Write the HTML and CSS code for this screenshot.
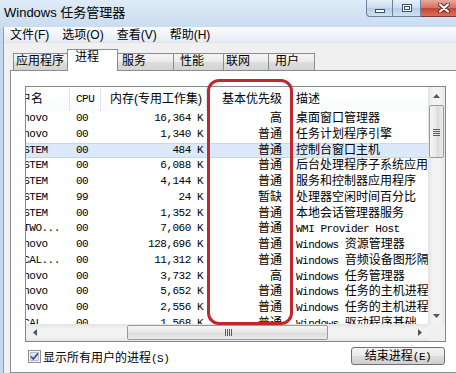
FILE: index.html
```html
<!DOCTYPE html>
<html lang="zh-CN">
<head>
    <meta charset="UTF-8">
    <meta name="viewport" content="width=device-width, initial-scale=1.0">
    <title>Windows 任务管理器</title>
    <link rel="stylesheet" href="styles.css">
</head>
<body>
    <div class="window">
        <div class="titlebar">
            <span class="title">Windows 任务管理器</span>
            <div class="controls">
                <span class="ctl ctl-min"><i></i></span>
                <span class="ctl ctl-max"><i></i></span>
                <span class="ctl ctl-close">
                    <svg width="12" height="10" viewBox="0 0 12 10">
                        <path d="M2 1.5 L10 8.5 M10 1.5 L2 8.5" stroke="#5a2420" stroke-width="4" stroke-linecap="round"/>
                        <path d="M2 1.5 L10 8.5 M10 1.5 L2 8.5" stroke="#ffffff" stroke-width="2.2" stroke-linecap="round"/>
                    </svg>
                </span>
            </div>
        </div>

        <div class="frame">
            <div class="client">
                <div class="menubar">
                    <span>文件(F)</span>
                    <span>选项(O)</span>
                    <span>查看(V)</span>
                    <span>帮助(H)</span>
                </div>

                <div class="tabs">
                    <span class="tab">应用程序</span>
                    <span class="tab active">进程</span>
                    <span class="tab">服务</span>
                    <span class="tab">性能</span>
                    <span class="tab">联网</span>
                    <span class="tab">用户</span>
                </div>

                <div class="page">
                    <div class="list">
                        <div class="list-body">
                            <div class="rows">
                                <div class="row head">
                                    <span class="c1">用户名</span>
                                    <span class="c2">CPU</span>
                                    <span class="c3">内存(专用工作集)</span>
                                    <span class="c4">基本优先级</span>
                                    <span class="c5">描述</span>
                                </div>
                                <div class="row">
                                    <span class="c1">Lenovo</span><span class="c2">00</span><span class="c3">16,364 K</span>
                                    <span class="c4">高</span><span class="c5">桌面窗口管理器</span>
                                </div>
                                <div class="row">
                                    <span class="c1">Lenovo</span><span class="c2">00</span><span class="c3">1,340 K</span>
                                    <span class="c4">普通</span><span class="c5">任务计划程序引擎</span>
                                </div>
                                <div class="row selected">
                                    <span class="c1">SYSTEM</span><span class="c2">00</span><span class="c3">484 K</span>
                                    <span class="c4">普通</span><span class="c5">控制台窗口主机</span>
                                </div>
                                <div class="row">
                                    <span class="c1">SYSTEM</span><span class="c2">00</span><span class="c3">6,088 K</span>
                                    <span class="c4">普通</span><span class="c5">后台处理程序子系统应用程序</span>
                                </div>
                                <div class="row">
                                    <span class="c1">SYSTEM</span><span class="c2">00</span><span class="c3">4,144 K</span>
                                    <span class="c4">普通</span><span class="c5">服务和控制器应用程序</span>
                                </div>
                                <div class="row">
                                    <span class="c1">SYSTEM</span><span class="c2">99</span><span class="c3">24 K</span>
                                    <span class="c4">暂缺</span><span class="c5">处理器空闲时间百分比</span>
                                </div>
                                <div class="row">
                                    <span class="c1">SYSTEM</span><span class="c2">00</span><span class="c3">1,352 K</span>
                                    <span class="c4">普通</span><span class="c5">本地会话管理器服务</span>
                                </div>
                                <div class="row">
                                    <span class="c1">NETWO...</span><span class="c2">00</span><span class="c3">7,060 K</span>
                                    <span class="c4">普通</span><span class="c5"><span class="en">WMI Provider Host</span></span>
                                </div>
                                <div class="row">
                                    <span class="c1">Lenovo</span><span class="c2">00</span><span class="c3">128,696 K</span>
                                    <span class="c4">普通</span><span class="c5"><span class="en">Windows </span>资源管理器</span>
                                </div>
                                <div class="row">
                                    <span class="c1">LOCAL...</span><span class="c2">00</span><span class="c3">11,312 K</span>
                                    <span class="c4">普通</span><span class="c5"><span class="en">Windows </span>音频设备图形隔离</span>
                                </div>
                                <div class="row">
                                    <span class="c1">Lenovo</span><span class="c2">00</span><span class="c3">3,732 K</span>
                                    <span class="c4">高</span><span class="c5"><span class="en">Windows </span>任务管理器</span>
                                </div>
                                <div class="row">
                                    <span class="c1">Lenovo</span><span class="c2">00</span><span class="c3">5,652 K</span>
                                    <span class="c4">普通</span><span class="c5"><span class="en">Windows </span>任务的主机进程</span>
                                </div>
                                <div class="row">
                                    <span class="c1">Lenovo</span><span class="c2">00</span><span class="c3">2,556 K</span>
                                    <span class="c4">普通</span><span class="c5"><span class="en">Windows </span>任务的主机进程</span>
                                </div>
                                <div class="row">
                                    <span class="c1">LOCAL...</span><span class="c2">00</span><span class="c3">1,568 K</span>
                                    <span class="c4">普通</span><span class="c5"><span class="en">Windows </span>驱动程序基础</span>
                                </div>
                            </div>

                            <div class="vscroll">
                                <span class="sb-btn">
                                    <svg width="7" height="4" viewBox="0 0 7 4"><path d="M0 4 L3.5 0 L7 4 Z" fill="#4d5563"/></svg>
                                </span>
                                <span class="vthumb">
                                    <svg width="7" height="8" viewBox="0 0 7 8"><path d="M0 1.5 H7 M0 3.5 H7 M0 5.5 H7 M0 7.5 H7" stroke="#5c5c5c" stroke-width="1"/></svg>
                                </span>
                                <span class="sb-fill"></span>
                                <span class="sb-btn">
                                    <svg width="7" height="4" viewBox="0 0 7 4"><path d="M0 0 L3.5 4 L7 0 Z" fill="#4d5563"/></svg>
                                </span>
                            </div>
                        </div>

                        <div class="hbar">
                            <div class="hscroll">
                                <span class="sb-btn">
                                    <svg width="4" height="7" viewBox="0 0 4 7"><path d="M4 0 L0 3.5 L4 7 Z" fill="#4d5563"/></svg>
                                </span>
                                <span class="hthumb">
                                    <svg width="8" height="7" viewBox="0 0 8 7"><path d="M1.5 0 V7 M3.5 0 V7 M5.5 0 V7 M7.5 0 V7" stroke="#5c5c5c" stroke-width="1"/></svg>
                                </span>
                                <span class="sb-fill"></span>
                                <span class="sb-btn">
                                    <svg width="4" height="7" viewBox="0 0 4 7"><path d="M0 0 L4 3.5 L0 7 Z" fill="#4d5563"/></svg>
                                </span>
                            </div>
                            <div class="corner"></div>
                        </div>
                    </div>

                    <div class="footer">
                        <label class="check">
                            <svg width="13" height="13" viewBox="0 0 13 13">
                                <rect x="0.5" y="0.5" width="12" height="12" fill="#f4f6f9" stroke="#8e8f8f"/>
                                <rect x="2.5" y="2.5" width="8" height="8" fill="#dfe6ef" stroke="#b4bdc9"/>
                                <path d="M3 6.5 L5.3 9 L10 3.5" fill="none" stroke="#30549a" stroke-width="1.8"/>
                            </svg>
                            <span>显示所有用户的进程<span class="key">(S)</span></span>
                        </label>
                        <button class="end-btn">结束进程<span class="key">(E)</span></button>
                    </div>
                </div>
            </div>
        </div>

        <!-- red annotation around the priority column -->
        <div class="mark"></div>
    </div>
</body>
</html>
```

FILE: styles.css
```css
/* General */
* {
  box-sizing: border-box;
  margin: 0;
  padding: 0;
}

body {
  width: 456px;
  height: 373px;
  overflow: hidden;
  font-family: "Liberation Sans", "Noto Sans CJK SC", sans-serif;
  font-size: 12px;
  color: #000000;
  background: #c4d9ef;
}

.window {
  position: relative;
  width: 456px;
  height: 373px;
  display: flex;
  flex-direction: column;
}

/* Title bar */
.titlebar {
  flex: none;
  height: 27px;
  display: flex;
  justify-content: space-between;
  background: linear-gradient(#dfebf7, #cadcf0);
}

.title {
  padding: 5px 0 0 4px;
  font-size: 13px;
  line-height: 15px;
}

.controls {
  display: flex;
  align-items: flex-start;
  margin-right: -12px;
}

.ctl {
  height: 17px;
  display: flex;
  align-items: center;
  justify-content: center;
  border: 1px solid #6a819f;
  border-top: none;
}

.ctl-min,
.ctl-max {
  background: linear-gradient(#e8f0f9, #cbdcee 50%, #b7cde6 51%, #cfe0f2);
}

.ctl-min {
  width: 27px;
  border-radius: 0 0 0 4px;
}

.ctl-max {
  width: 28px;
  border-left: none;
}

.ctl-close {
  width: 47px;
  border-left: none;
  border-color: #7d3a34;
  border-radius: 0 0 4px 0;
  background: linear-gradient(#e8a999, #d4705f 50%, #c3432f 51%, #d8705a);
}

.ctl-min i {
  width: 10px;
  height: 4px;
  margin-top: 6px;
  border: 1px solid #3b4f6a;
  background: #ffffff;
}

.ctl-max i {
  width: 10px;
  height: 8px;
  border: 1px solid #3b4f6a;
  box-shadow: inset 0 0 0 1px #ffffff, inset 0 0 0 2px #3b4f6a;
  background: #e9f0f8;
}

/* Frame and client area */
.frame {
  flex: 1;
  display: flex;
  padding-left: 3px;
  min-height: 0;
}

.client {
  flex: 1;
  margin-right: -12px;
  display: flex;
  flex-direction: column;
  border-left: 1px solid #8d9fb5;
  background: #f0f0f0;
}

.menubar {
  flex: none;
  height: 16px;
  display: flex;
  gap: 13px;
  padding-left: 6px;
  line-height: 16px;
  background: linear-gradient(#fbfcfe, #e6ebf4);
  border-bottom: 1px solid #dfe4ec;
}

/* Tabs */
.tabs {
  flex: none;
  height: 27px;
  display: flex;
  align-items: flex-end;
  padding-left: 9px;
}

.tab {
  height: 17px;
  line-height: 15px;
  border: 1px solid #898c95;
  border-bottom: none;
  margin-left: -1px;
  background: linear-gradient(#f4f4f4, #ebebeb 50%, #dedede 51%, #d3d3d3);
}

.tab:nth-child(1) { width: 55px; padding-left: 2px; margin-left: 0; }
.tab:nth-child(2) { width: 51px; padding-left: 7px; }
.tab:nth-child(3) { width: 57px; padding-left: 4px; }
.tab:nth-child(4) { width: 51px; padding-left: 6px; }
.tab:nth-child(5) { width: 46px; padding-left: 2px; }
.tab:nth-child(6) { width: 47px; padding-left: 6px; }

.tab.active {
  position: relative;
  z-index: 1;
  height: 22px;
  margin-bottom: -1px;
  line-height: 14px;
  background: #ffffff;
}

/* Tab page */
.page {
  flex: 1;
  margin-left: 6px;
  padding: 15px 0 0 14px;
  border: 1px solid #898c95;
  background: #ffffff;
}

/* Process list */
.list {
  width: 421px;
  height: 256px;
  display: flex;
  flex-direction: column;
  border: 1px solid #828790;
}

.list-body {
  flex: 1;
  display: flex;
  min-height: 0;
}

.rows {
  width: 402px;
  overflow: hidden;
}

.row {
  display: grid;
  grid-template-columns: 44px 31px 106px 84px 137px;
  height: 15.75px;
  line-height: 15.75px;
  white-space: nowrap;
}

.row > span {
  overflow: hidden;
}

.row .c1,
.row .c2,
.row .c3,
.row .en {
  font-family: "Liberation Mono", "Noto Sans CJK SC", monospace;
  font-size: 11px;
  letter-spacing: -0.5px;
}

.c1 { text-indent: -15px; }
.c2 { padding-left: 6px; }
.c3 { text-align: right; padding-right: 4px; }
.c4 { text-align: right; padding-right: 9px; }
.c5 { padding-left: 5px; }

.row.head {
  height: 24px;
  line-height: 24px;
  background: linear-gradient(#ffffff, #fafbfc);
}

.row.head > span {
  border-right: 1px solid #e3e5e8;
}

.row.head .c1,
.row.head .c3 {
  font-family: "Liberation Sans", "Noto Sans CJK SC", sans-serif;
  font-size: 12px;
  letter-spacing: 0;
}

.row.head .c1 { text-indent: -19px; }
.row.head .c3 { text-align: left; padding-left: 9px; padding-right: 0; }
.row.head .c4 { padding-right: 8px; }
.row.head .c5 { border-right: none; }

.row.selected {
  background: #dce9fb;
  box-shadow: inset 0 1px #c3d8f3, inset 0 -1px #c3d8f3;
}

/* Scrollbars */
.vscroll {
  width: 17px;
  display: flex;
  flex-direction: column;
  background: linear-gradient(to right, #e4e4e4, #f3f3f3 30%, #f3f3f3 70%, #e6e6e6);
}

.hbar {
  flex: none;
  height: 17px;
  display: flex;
}

.hscroll {
  width: 402px;
  display: flex;
  background: linear-gradient(#e4e4e4, #f3f3f3 30%, #f3f3f3 70%, #e6e6e6);
}

.corner {
  width: 17px;
  background: #f0f0f0;
}

.sb-btn {
  flex: none;
  width: 17px;
  height: 17px;
  display: flex;
  align-items: center;
  justify-content: center;
}

.sb-fill {
  flex: 1;
}

.vthumb {
  flex: none;
  height: 53px;
  margin: 1px 1px 0;
  display: flex;
  align-items: center;
  justify-content: center;
  border: 1px solid #9a9a9a;
  border-radius: 2px;
  background: linear-gradient(to right, #f6f6f6, #e6e6e6 50%, #d9d9d9 51%, #ececec);
}

.hthumb {
  flex: none;
  width: 201px;
  margin: 1px 0 1px 84px;
  display: flex;
  align-items: center;
  justify-content: center;
  border: 1px solid #9a9a9a;
  border-radius: 2px;
  background: linear-gradient(#f6f6f6, #e6e6e6 50%, #d9d9d9 51%, #ececec);
}

/* Footer */
.footer {
  width: 421px;
  height: 18px;
  margin-top: 5px;
  padding: 0 1px 0 3px;
  display: flex;
  align-items: center;
  justify-content: space-between;
}

.check {
  display: flex;
  align-items: center;
  gap: 2px;
}

.key {
  font-family: "Liberation Mono", monospace;
  font-size: 11px;
  letter-spacing: -0.5px;
}

.end-btn {
  width: 94px;
  height: 18px;
  font-family: "Liberation Sans", "Noto Sans CJK SC", sans-serif;
  font-size: 12px;
  line-height: 16px;
  color: #000000;
  border: 1px solid #707070;
  border-radius: 3px;
  background: linear-gradient(#f2f2f2, #ebebeb 50%, #dddddd 51%, #cfcfcf);
}

/* Annotation */
.mark {
  position: absolute;
  left: 207px;
  top: 79px;
  width: 86px;
  height: 246px;
  border: 3px solid #c0282e;
  border-radius: 12px;
}
```
